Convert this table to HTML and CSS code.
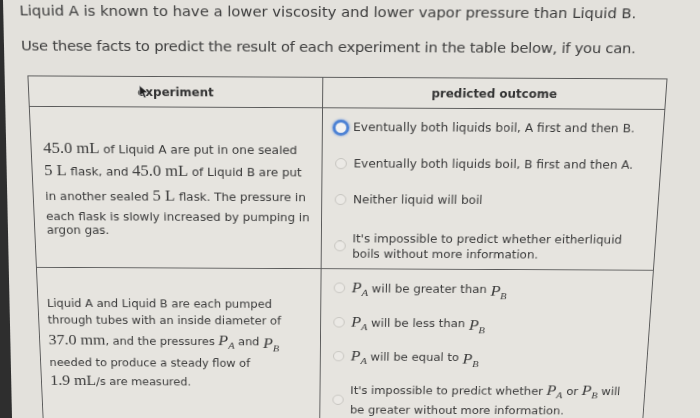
FILE: index.html
```html
<!DOCTYPE html>
<html>
<head>
<meta charset="utf-8">
<link rel="stylesheet" href="styles.css">
</head>
<body>
<div class="bezel"></div>
<div class="page">
  <p class="intro">Liquid A is known to have a lower viscosity and lower vapor pressure than Liquid B.</p>
  <p class="intro second">Use these facts to predict the result of each experiment in the table below, if you can.</p>
  <table class="grid">
    <colgroup><col class="col-exp"><col class="col-out"></colgroup>
    <thead>
      <tr>
        <th class="exp-head">experiment<svg class="cursor" viewBox="0 0 10 16" width="10" height="15"><path d="M1 1 L1 13 L4 10 L6 15 L8 14 L6 9 L10 9 Z" fill="#1e1e1e" stroke="#ddd" stroke-width="0.7"/></svg></th>
        <th class="out-head">predicted outcome</th>
      </tr>
    </thead>
    <tbody>
      <tr class="row-one">
        <td class="desc">
          <div class="ln h24"><span class="m">45.0 mL</span> of Liquid A are put in one sealed</div>
          <div class="ln h25"><span class="m">5 L</span> flask, and <span class="m">45.0 mL</span> of Liquid B are put</div>
          <div class="ln h28">in another sealed <span class="m">5 L</span> flask. The pressure in</div>
          <div class="ln h16">each flask is slowly increased by pumping in</div>
          <div class="ln h15">argon gas.</div>
        </td>
        <td class="opts">
          <div class="stack">
            <div class="opt"><span class="radio selected"></span><span class="label">Eventually both liquids boil, A first and then B.</span></div>
            <div class="opt"><span class="radio"></span><span class="label">Eventually both liquids boil, B first and then A.</span></div>
            <div class="opt"><span class="radio"></span><span class="label">Neither liquid will boil</span></div>
            <div class="opt two"><span class="radio"></span><span class="label">It's impossible to predict whether eitherliquid<br>boils without more information.</span></div>
          </div>
        </td>
      </tr>
      <tr class="row-two">
        <td class="desc">
          <div class="stack">
            <div class="ln h19">Liquid A and Liquid B are each pumped</div>
            <div class="ln h19">through tubes with an inside diameter of</div>
            <div class="ln h29"><span class="m">37.0 mm</span>, and the pressures <span class="v">P<sub>A</sub></span> and <span class="v low">P<sub>B</sub></span></div>
            <div class="ln h20">needed to produce a steady flow of</div>
            <div class="ln h24"><span class="m">1.9 mL</span>/s are measured.</div>
          </div>
        </td>
        <td class="opts">
          <div class="stack">
            <div class="opt"><span class="radio"></span><span class="label"><span class="v">P<sub>A</sub></span> will be greater than <span class="v low">P<sub>B</sub></span></span></div>
            <div class="opt"><span class="radio"></span><span class="label"><span class="v">P<sub>A</sub></span> will be less than <span class="v low">P<sub>B</sub></span></span></div>
            <div class="opt"><span class="radio"></span><span class="label"><span class="v">P<sub>A</sub></span> will be equal to <span class="v low">P<sub>B</sub></span></span></div>
            <div class="opt two wide"><span class="radio"></span><span class="label">It's impossible to predict whether <span class="v">P<sub>A</sub></span> or <span class="v">P<sub>B</sub></span> will<br>be greater without more information.</span></div>
          </div>
        </td>
      </tr>
    </tbody>
  </table>
</div>
</body>
</html>
```

FILE: styles.css
```css
html, body {
  margin: 0;
  padding: 0;
  background: #e3e1dc;
  overflow: hidden;
}

body {
  width: 700px;
  height: 418px;
  position: relative;
  font-family: "DejaVu Sans", Verdana, sans-serif;
  color: #3a3a3a;
}

.bezel {
  position: absolute;
  left: 0;
  top: 0;
  width: 14px;
  height: 418px;
  background: #2e2e2e;
  clip-path: polygon(0 0, 3px 0, 12px 418px, 0 418px);
  z-index: 2;
}

.page {
  width: 700px;
  box-sizing: border-box;
  padding: 3px 0 0 19px;
  transform-origin: 300px 0;
  transform: rotate(0.27deg) perspective(1000px) rotateX(-10.1deg);
}

.intro {
  margin: 0;
  font-size: 14.8px;
  line-height: 18px;
  color: #3c3c3c;
}

.intro.second {
  margin-top: 18px;
  letter-spacing: -0.22px;
}

.grid {
  margin: 22px 0 0 5px;
  width: 649px;
  table-layout: fixed;
  border-collapse: collapse;
  background: #e6e4df;
}

.col-exp {
  width: 299px;
}

.grid th,
.grid td {
  border: 1px solid #5a5a5a;
  padding: 0;
}

.grid th {
  height: 31px;
  font-size: 12px;
  font-weight: bold;
  color: #333;
  text-align: center;
}

.exp-head {
  position: relative;
}

.cursor {
  position: absolute;
  left: 111px;
  top: 8px;
}

.desc {
  font-size: 12.3px;
  padding-left: 12px !important;
  white-space: nowrap;
}

.row-one td {
  height: 174px;
}

.row-one .desc {
  vertical-align: middle;
}

.row-two td {
  height: 180px;
  vertical-align: top;
}

.row-two .desc {
  font-size: 12.1px;
  padding-left: 9px !important;
}

.row-two .desc .stack {
  padding-top: 31px;
}

.ln {
  display: block;
}

.h15 { line-height: 15px; height: 15px; }
.h16 { line-height: 16px; height: 16px; }
.h19 { line-height: 19px; height: 19px; }
.h20 { line-height: 20px; height: 20px; }
.h24 { line-height: 24px; height: 24px; }
.h25 { line-height: 25px; height: 25px; }
.h28 { line-height: 28px; height: 28px; }
.h29 { line-height: 29px; height: 29px; }

.m {
  font-family: "Liberation Serif", "Times New Roman", serif;
  font-size: 17px;
  line-height: 16px;
}

.v {
  font-family: "Liberation Serif", "Times New Roman", serif;
  font-style: italic;
  font-size: 17px;
  line-height: 16px;
}

.v sub {
  font-size: 11px;
  vertical-align: -4px;
  line-height: 0;
}

.low {
  position: relative;
  top: 3px;
}

.opts {
  vertical-align: top;
  white-space: nowrap;
}

.opts .stack {
  padding: 10px 0 0 10px;
}

.row-two .opts .stack {
  padding-top: 11px;
}

.opt {
  display: flex;
  align-items: center;
  gap: 4px;
  height: 20px;
  margin-bottom: 19px;
  font-size: 12.4px;
  line-height: 16px;
}

.opt.two {
  height: 34px;
  padding-top: 5px;
  line-height: 17px;
}

.opt.two.wide {
  height: 46px;
  padding-top: 0;
  margin-top: -1px;
  line-height: 23px;
}

.opt:last-child {
  margin-bottom: 0;
}

.radio {
  flex: none;
  width: 12px;
  height: 12px;
  margin: 0 3px 0 3px;
  border-radius: 50%;
  border: 1px solid #c6c4bf;
  background: #ebe9e5;
  box-sizing: border-box;
}

.radio.selected {
  width: 17px;
  height: 17px;
  margin: 0;
  border: 3px solid #4d82d4;
  background: #f2f2f2;
  box-shadow: 0 0 2px 1px rgba(90, 140, 220, 0.45);
}
```
